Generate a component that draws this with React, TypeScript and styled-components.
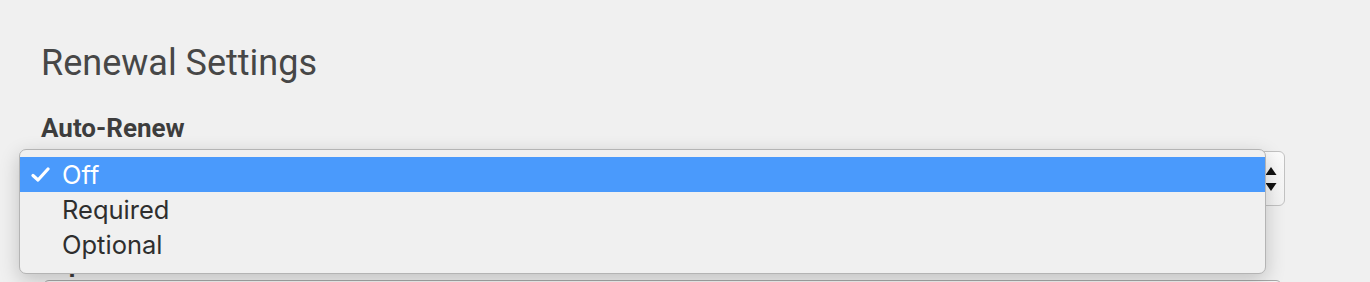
import React from 'react';
import styled, { createGlobalStyle } from 'styled-components';

const GlobalStyle = createGlobalStyle`
  body {
    margin: 0;
    background: #f0f0f0;
    font-family: Roboto, "Liberation Sans", sans-serif;
  }
`;

interface Option {
  label: string;
  selected?: boolean;
}

const options: Array<Option> = [
  { label: 'Off', selected: true },
  { label: 'Required' },
  { label: 'Optional' },
];

export default function App() {
  return (
    <>
      <GlobalStyle />
      <Section>
        <Heading>Renewal Settings</Heading>
        <Field>
          <Label>Auto-Renew</Label>
          <SelectWrap>
            <SelectBox>
              <svg width="12" height="24" viewBox="0 0 12 24">
                <path d="M6 0 L11.5 8 L0.5 8 Z" fill="#111" />
                <path d="M0.5 16 L11.5 16 L6 24 Z" fill="#111" />
              </svg>
            </SelectBox>
            <Menu>
              {options.map((option) => (
                <MenuItem key={option.label} selected={option.selected}>
                  <Check>
                    {option.selected && (
                      <svg width="19" height="15" viewBox="0 0 19 15">
                        <path
                          d="M2 8.5 L7 13 L17 2"
                          fill="none"
                          stroke="#fff"
                          strokeWidth="3.2"
                          strokeLinecap="round"
                          strokeLinejoin="round"
                        />
                      </svg>
                    )}
                  </Check>
                  {option.label}
                </MenuItem>
              ))}
            </Menu>
          </SelectWrap>
        </Field>
        <Field $gap={3} $top={43}>
          <Label>Expiration Date</Label>
          <InputBox />
        </Field>
      </Section>
    </>
  );
}

const Section = styled.div`
  display: flex;
  flex-direction: column;
  padding: 42px 85px 0 22px;
  height: 282px;
  box-sizing: border-box;
  overflow: hidden;
`;

const Heading = styled.h2`
  margin: 0 0 0 19px;
  font-size: 36px;
  line-height: 42px;
  font-weight: 400;
  color: #474747;
`;

const Field = styled.div<{ $gap?: number; $top?: number }>`
  display: flex;
  flex-direction: column;
  gap: ${(p) => p.$gap ?? 9}px;
  margin-top: ${(p) => p.$top ?? 30}px;
`;

const Label = styled.label`
  margin-left: 19px;
  font-size: 26px;
  line-height: 28px;
  font-weight: 700;
  color: #3d3d3d;
`;

const SelectWrap = styled.div`
  position: relative;
`;

const SelectBox = styled.div`
  display: flex;
  justify-content: flex-end;
  align-items: center;
  height: 55px;
  box-sizing: border-box;
  border: 1px solid #c2c2c2;
  border-radius: 6px;
  background: linear-gradient(#fbfbfb, #f3f3f3);
  padding-right: 7px;
`;

const Menu = styled.div`
  position: absolute;
  top: -2px;
  left: -3px;
  width: 1247px;
  box-sizing: border-box;
  padding: 7px 0 11px;
  background: #f0f0f0;
  border: 1px solid #b4b4b4;
  border-radius: 7px;
  box-shadow: 0 6px 20px rgba(0, 0, 0, 0.2);
  font-family: Inter, "Noto Sans", sans-serif;
`;

const MenuItem = styled.div<{ selected?: boolean }>`
  display: flex;
  align-items: center;
  height: 35px;
  padding-left: 11px;
  font-size: 25.5px;
  color: ${(p) => (p.selected ? '#ffffff' : '#2e2e2e')};
  background: ${(p) => (p.selected ? '#4a9afc' : 'transparent')};
`;

const Check = styled.span`
  display: flex;
  align-items: center;
  width: 31px;
`;

const InputBox = styled.div`
  margin-left: 21px;
  margin-right: 3px;
  height: 40px;
  border: 1px solid #a8a8a8;
  border-radius: 6px;
  background: #f6f6f6;
`;
